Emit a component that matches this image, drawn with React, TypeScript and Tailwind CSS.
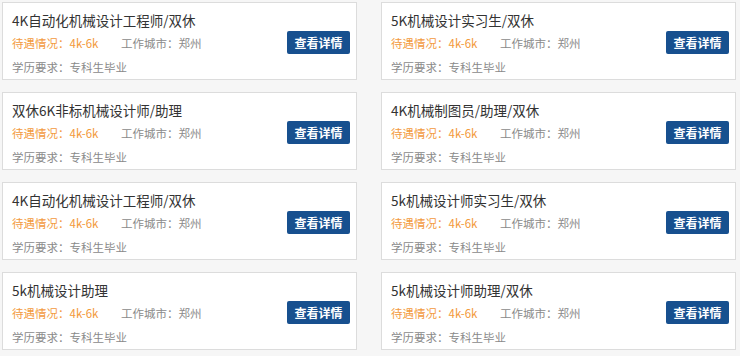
const jobs = [
  "4K自动化机械设计工程师/双休",
  "5K机械设计实习生/双休",
  "双休6K非标机械设计师/助理",
  "4K机械制图员/助理/双休",
  "4K自动化机械设计工程师/双休",
  "5k机械设计师实习生/双休",
  "5k机械设计助理",
  "5k机械设计师助理/双休",
];

function JobCard({ title }: { title: string }) {
  return (
    <div className="flex h-[78px] items-center border border-[#dcdcdc] bg-white pl-[9px] pr-[6px]">
      <div className="flex-1 self-start pt-[6px]">
        <h3 className="text-[13.5px] leading-[22px] text-[#333]">{title}</h3>
        <div className="flex text-[11.5px] leading-[24px]">
          <span className="w-[109px] text-[#f39a3d]">待遇情况：4k-6k</span>
          <span className="text-[#8a8a8a]">工作城市：郑州</span>
        </div>
        <p className="text-[11.5px] leading-[24px] text-[#8a8a8a]">学历要求：专科生毕业</p>
      </div>
      <button className="mt-[3px] h-[23px] w-[63px] rounded-[2px] bg-[#17508f] text-[12px] font-bold text-white">
        查看详情
      </button>
    </div>
  );
}

export default function App() {
  return (
    <div
      className="min-h-[356px] w-[740px] bg-[#f6f6f6] pl-[2px] pt-[2px]"
      style={{ fontFamily: '"Noto Sans CJK SC", "Noto Sans", sans-serif' }}
    >
      <div className="grid grid-cols-[355px_355px] gap-x-[24px] gap-y-[12px]">
        {jobs.map((t, i) => (
          <JobCard key={i} title={t} />
        ))}
      </div>
    </div>
  );
}
